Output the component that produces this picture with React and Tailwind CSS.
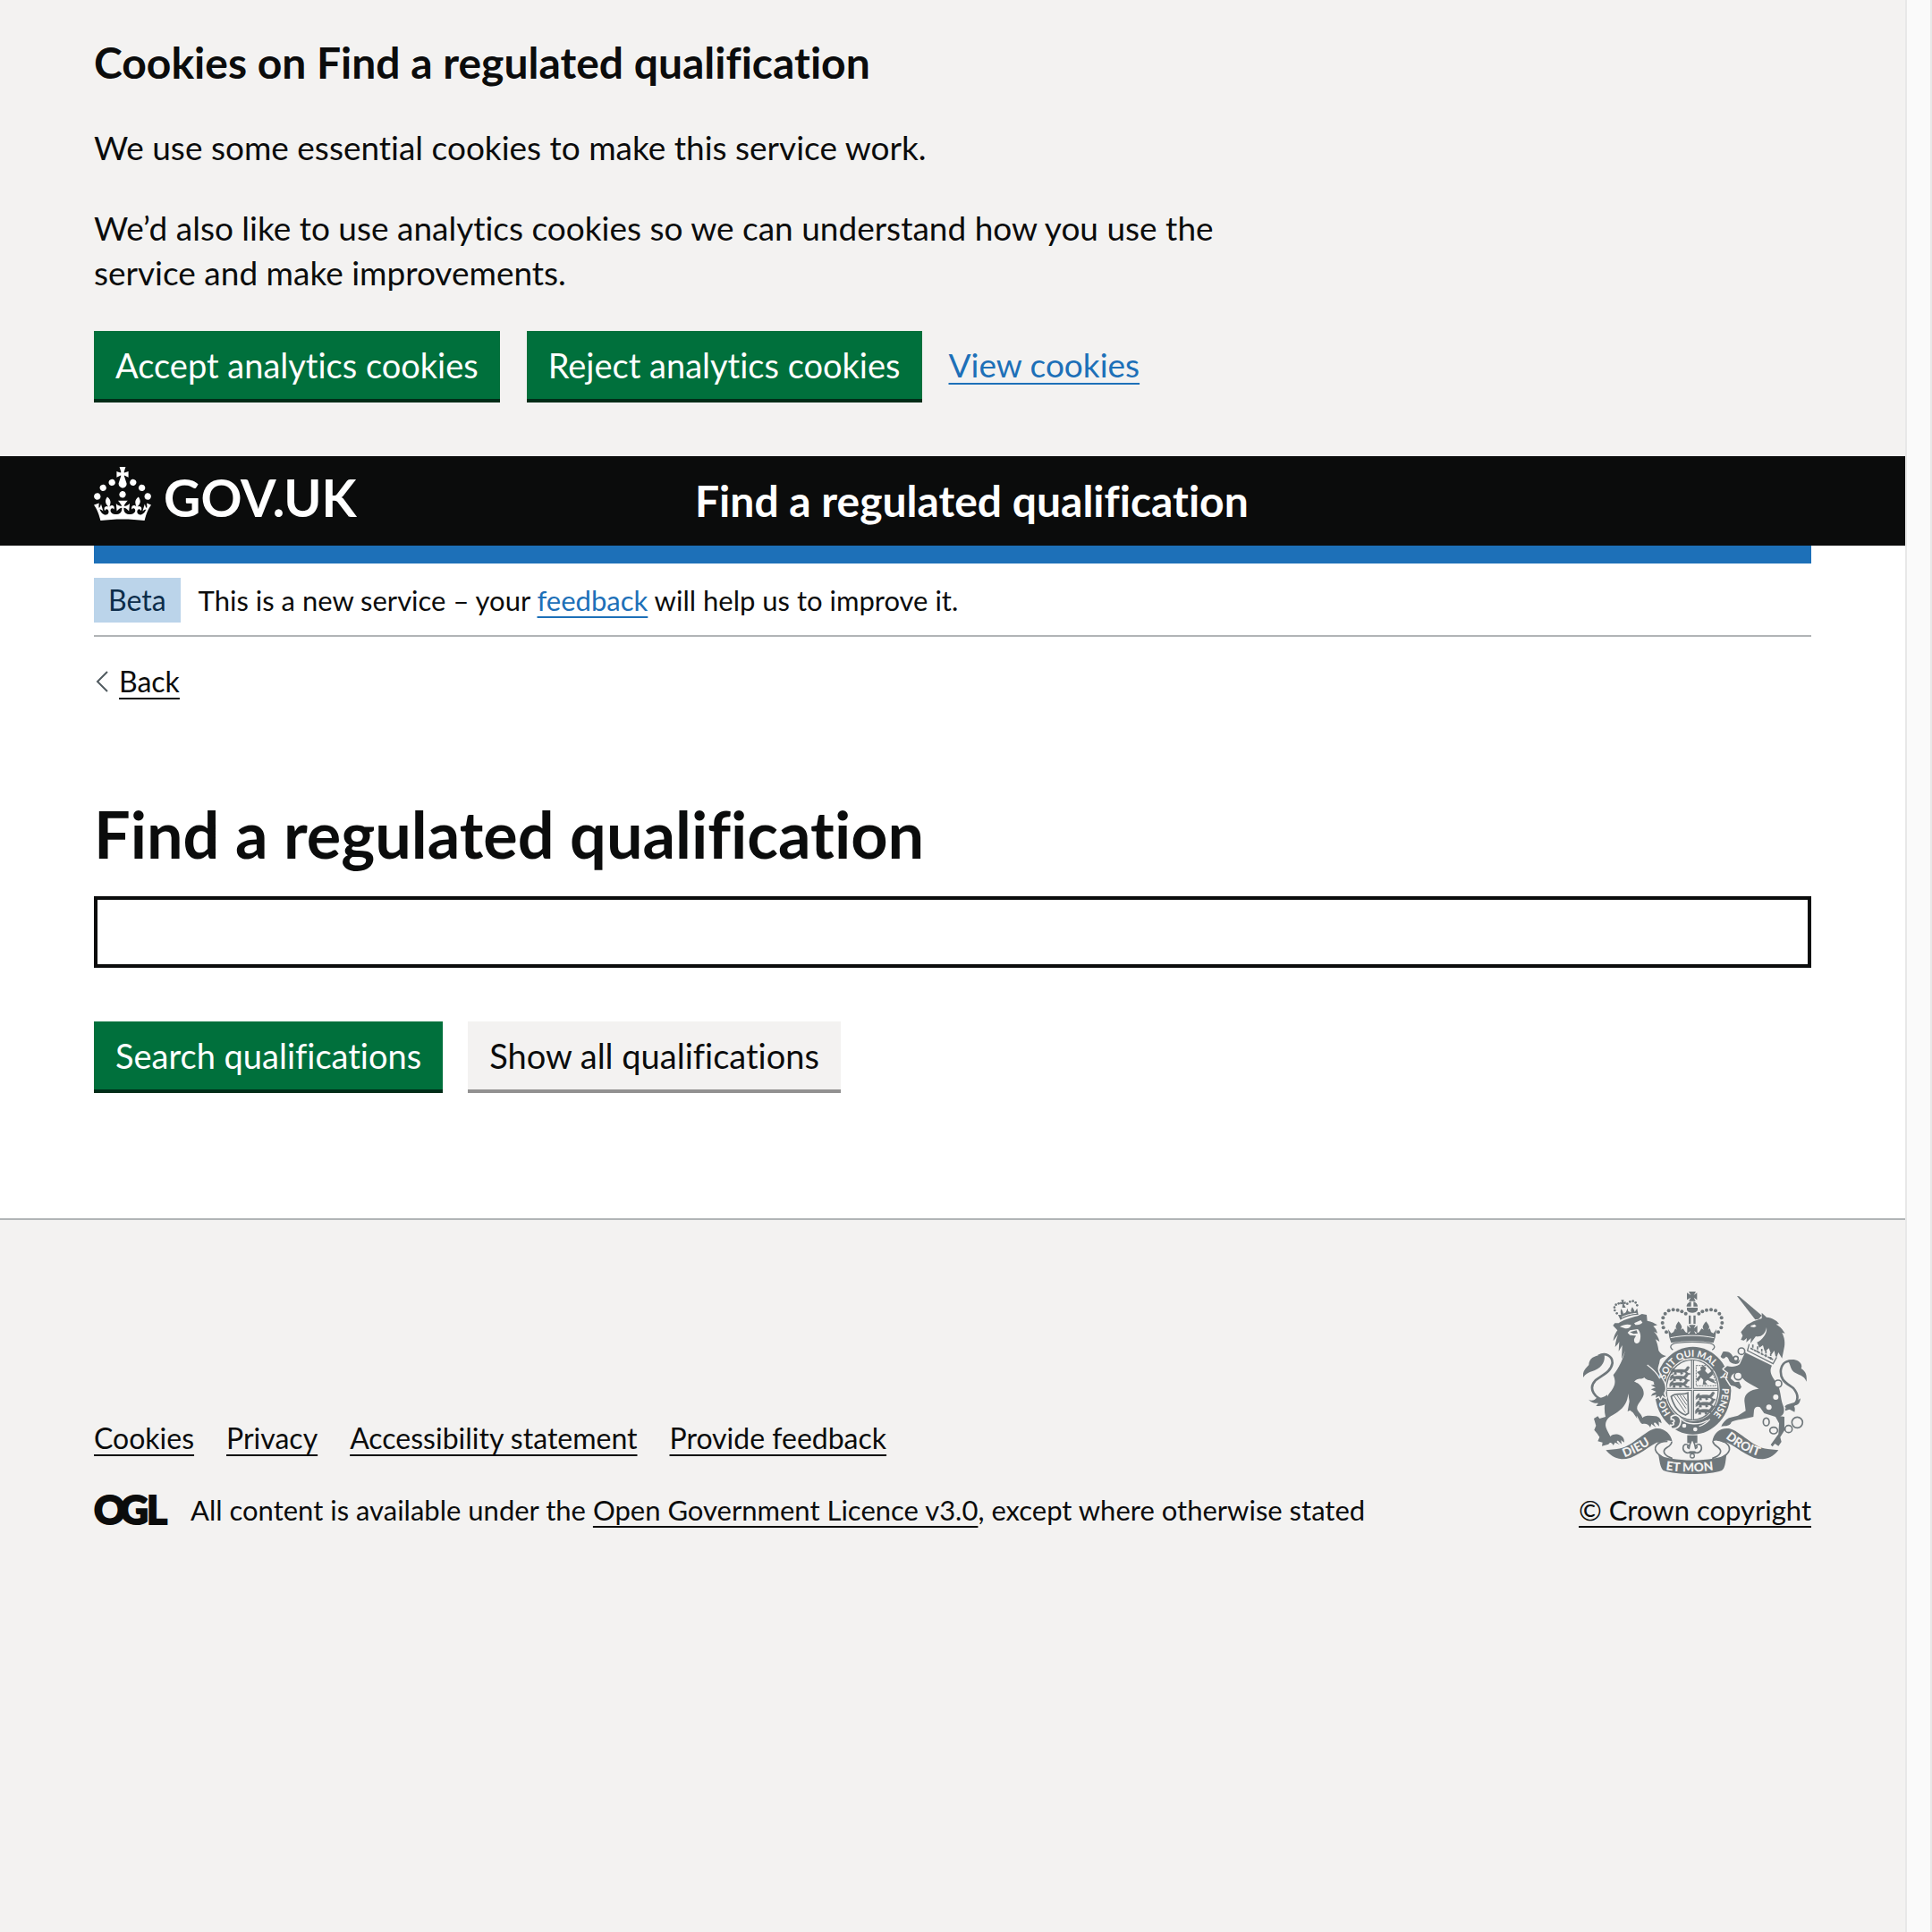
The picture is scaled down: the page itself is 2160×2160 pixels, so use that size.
import React from "react";

const link =
  "underline decoration-2 underline-offset-[6px] [text-decoration-skip-ink:none]";

function Crown() {
  return (
    <svg viewBox="0 0 32 30" className="h-[60px] w-16 shrink-0 fill-white" aria-hidden="true">
      <path d="M22.6 10.4c-1 .4-2-.1-2.4-1-.4-.9.1-2 1-2.4.9-.4 2 .1 2.4 1s-.1 2-1 2.4m-5.9 6.7c-.9.4-2-.1-2.4-1-.4-.9.1-2 1-2.4.9-.4 2 .1 2.4 1s-.1 2-1 2.4m10.8-3.7c-1 .4-2-.1-2.4-1-.4-.9.1-2 1-2.4.9-.4 2 .1 2.4 1s0 2-1 2.4m3.3 4.8c-1 .4-2-.1-2.4-1-.4-.9.1-2 1-2.4.9-.4 2 .1 2.4 1s-.1 2-1 2.4M17 4.7l2.3 1.2V2.5l-2.3.7-.2-.2.9-3h-3.4l.9 3-.2.2c-.1.1-2.3-.7-2.3-.7v3.4L15 4.7c.1.1.1.2.2.2l-1.3 4c-.1.2-.1.4-.1.6 0 1.1.8 2 1.9 2.2h.7c1-.2 1.9-1.1 1.9-2.1 0-.2 0-.4-.1-.6l-1.3-4c-.1-.2 0-.2.1-.3m-7.6 5.7c.9.4 2-.1 2.4-1 .4-.9-.1-2-1-2.4-.9-.4-2 .1-2.4 1s0 2 1 2.4m-5 3c.9.4 2-.1 2.4-1 .4-.9-.1-2-1-2.4-.9-.4-2 .1-2.4 1s.1 2 1 2.4m-3.2 4.8c.9.4 2-.1 2.4-1 .4-.9-.1-2-1-2.4-.9-.4-2 .1-2.4 1s0 2 1 2.4m14.8 11c4.4 0 8.6.3 12.3.8 1.1-4.5 2.4-7 3.7-8.8l-2.5-.9c.2 1.3.3 1.9 0 2.7-.4-.4-.8-1.1-1.1-2.3l-1.2 4c.7-.5 1.3-.8 2-.9-1.1 2.5-2.6 3.1-3.5 3-1.1-.2-1.7-1.2-1.5-2.1.3-1.2 1.5-1.5 2.1-.1 1.1-2.3-.8-3-2-2.3 1.9-1.9 2.1-3.5.6-5.6-2.1 1.6-2.1 3.2-1.2 5.5-1.2-1.4-3.2-.6-2.5 1.6.9-1.4 2.1-.5 1.9.8-.2 1.1-1.7 2.1-3.5 1.9-2.7-.2-2.9-2.1-2.9-3.6.7-.1 1.9.5 2.9 1.9l.4-4.3c-1.1 1.1-2.1 1.4-3.2 1.4.4-1.2 2.1-3 2.1-3h-5.4s1.7 1.9 2.1 3c-1.1 0-2.1-.2-3.2-1.4l.4 4.3c1-1.4 2.2-2 2.9-1.9-.1 1.5-.2 3.4-2.9 3.6-1.9.2-3.4-.8-3.5-1.9-.2-1.3 1-2.2 1.9-.8.7-2.3-1.2-3-2.5-1.6.9-2.2.9-3.9-1.2-5.5-1.5 2-1.3 3.7.6 5.6-1.2-.7-3.1 0-2 2.3.6-1.4 1.8-1.1 2.1.1.2.9-.3 1.9-1.5 2.1-.9.2-2.4-.5-3.5-3 .6 0 1.2.3 2 .9l-1.2-4c-.3 1.1-.7 1.9-1.1 2.3-.3-.8-.2-1.4 0-2.7l-2.9.9C1.3 23 2.6 25.5 3.7 30c3.7-.5 7.9-.8 12.3-.8" />
    </svg>
  );
}

const INK = "#6f777b";
const PAPER = "#f3f2f1";

function Pearls({ points, r }) {
  return points.map(([x, y]) => <circle key={`${x}-${y}`} cx={x} cy={y} r={r} />);
}

/* A small heraldic lion passant, repeated in the quarters of the shield. */
function Passant({ x, y }) {
  return (
    <path
      transform={`translate(${x} ${y})`}
      d="M0 14 L3 6 L8 1 L14 0 L12 5 L18 6 C28 4 38 5 46 6 C54 4 52 -4 58 -5 C66 -5 64 2 60 4 C60 9 56 11 53 12 L60 18 L66 18 L66 22 L56 22 L48 15 L40 15 L42 20 L34 22 L33 16 L20 15 L20 22 L11 22 L13 14 L8 14 L5 19 L0 19 L4 12Z"
    />
  );
}

function Crest() {
  return (
    <svg
      viewBox="57 42 750 612"
      className="h-[204px] w-[250px]"
      fill={INK}
      role="img"
      aria-label="Royal coat of arms"
    >
      <defs>
        <path id="garter-top" d="M332 338 A98 113 0 0 1 514 326" />
        <path id="garter-right" d="M523 366 A98 113 0 0 1 480 467" />
        <path id="garter-left" d="M351 450 A98 113 0 0 1 327 385" />
        <path id="scroll-left" d="M196 598 Q252 578 310 534" />
        <path id="scroll-right" d="M534 532 Q590 582 670 600" />
        <path id="scroll-mid" d="M334 640 Q423 654 524 636" />
      </defs>

      {/* imperial crown */}
      <path d="M411 42 H435 L428 54 L439 46 V70 L428 62 L434 74 H411 L418 62 L405 70 V46 L418 54Z" />
      <path d="M427 76 V92 H441 C441 84 434 77 427 76Z M419 76 C411 77 404 84 404 92 H419Z" />
      <path d="M405 96 H441 V104 C436 116 410 116 405 104Z" />
      <Pearls
        r={6}
        points={[[336, 178], [326, 163], [323, 147], [325, 130], [332, 116], [344, 106], [359, 103], [374, 104], [388, 109], [401, 116], [510, 178], [520, 163], [523, 147], [521, 130], [514, 116], [501, 106], [486, 103], [471, 104], [457, 109], [445, 116]]}
      />
      <path d="M411 122 H418 V150 H411Z M427 122 H434 V150 H427Z" />
      <path d="M342 168 L352 182 L360 178 L366 166 L372 170 C362 160 372 150 377 142 C382 150 394 160 384 170 L392 166 L400 178 L412 184 L418 174 L406 182 V156 L418 166 L412 154 H434 L428 166 L440 156 V182 L429 174 L434 184 L446 178 L454 166 L462 170 C452 160 464 150 469 142 C474 150 486 160 476 170 L482 166 L486 178 L494 182 L504 168 L500 196 L494 214 C450 206 396 206 352 214 L346 196Z" />
      <path d="M350 197 C400 187 446 187 496 197" fill="none" stroke={PAPER} strokeWidth="3" />
      <path d="M358 238 C342 226 354 216 372 214 C406 210 440 210 474 214 C494 216 506 226 490 238" fill={PAPER} stroke={INK} strokeWidth="4" />

      {/* garter */}
      <ellipse cx="425" cy="374" rx="128" ry="147" />
      <ellipse cx="423" cy="371" rx="92" ry="106" fill={PAPER} />
      <ellipse cx="423" cy="372" rx="87" ry="101" fill={PAPER} stroke={INK} strokeWidth="4" />
      <path d="M424 270 V474 M337 370 H509" stroke={INK} strokeWidth="10" />
      <path d="M424 272 V472 M339 370 H507" stroke={PAPER} strokeWidth="3" />
      <g stroke={INK} strokeWidth="1">
        <Passant x={350} y={298} />
        <Passant x={347} y={320} />
        <Passant x={346} y={342} />
        <Passant x={434} y={384} />
        <Passant x={434} y={408} />
        <Passant x={432} y={432} />
      </g>
      <path d="M438 312 L452 306 L450 296 L460 290 L470 298 L466 308 L476 318 L488 308 L482 300 L494 304 L492 320 L480 332 L494 336 L500 350 L488 346 L474 338 L466 344 L474 354 L458 354 L460 338 L452 330 L442 344 L436 336 L448 322Z" />
      <path d="M436 290 H470 C486 300 500 324 502 358 H436Z" fill="none" stroke={INK} strokeWidth="3" strokeDasharray="6 3" />
      <path d="M352 394 C368 378 390 392 408 382 L410 450 L400 456 C376 448 362 430 352 394Z" fill="none" stroke={INK} strokeWidth="5" />
      <path d="M362 392 L400 448 M372 390 L402 434 M382 390 L404 422 M392 390 L406 410" stroke={INK} strokeWidth="3" />

      {/* buckle and strap */}
      <path d="M384 468 C404 490 446 490 474 474" fill="none" stroke={PAPER} strokeWidth="4" />
      <path d="M352 462 C368 450 384 460 384 478 C382 496 368 506 352 500 L350 490 C360 492 364 486 358 482 C366 478 362 468 352 470Z" stroke={PAPER} strokeWidth="5" />
      <circle cx="396" cy="492" r="7" fill={PAPER} />
      <circle cx="433" cy="504" r="7" fill={PAPER} />
      <path d="M446 494 C462 490 470 484 482 470" fill="none" stroke={PAPER} strokeWidth="4" />

      {/* lion */}
      <path
        paintOrder="stroke"
        stroke={PAPER}
        strokeWidth="9"
        strokeLinejoin="round"
        d="M157 156 L163 148 L176 148 C186 140 214 130 240 124 L254 117 L270 120 L272 140 C286 142 296 148 306 154 L292 158 C300 164 304 172 306 182 L294 176 C304 186 310 196 313 210 L300 202 C304 212 308 224 310 240 C316 250 324 256 335 258 C326 264 320 262 314 272 C312 290 304 298 310 312 L322 336 C330 348 334 360 332 372 C330 380 326 380 328 386 L334 398 L322 390 L316 402 L312 392 L300 398 L302 388 L284 392 L290 384 L302 378 L284 370 L300 364 L284 356 L296 354 L292 344 C270 338 250 340 232 346 C250 352 266 374 258 394 C250 412 236 422 238 436 C242 448 252 452 256 466 C264 456 284 458 300 460 C312 462 318 470 320 484 L310 478 L312 494 L300 482 C294 480 290 482 302 498 L286 486 L282 498 C276 484 264 484 256 486 C246 482 244 466 236 458 L238 468 L224 448 L214 440 L206 444 L212 410 L208 384 C206 410 196 430 172 446 C150 460 132 466 132 490 C134 506 142 514 148 528 C158 518 172 520 182 524 C192 530 196 538 194 548 L184 540 L186 554 L174 542 C168 542 168 546 180 556 L164 548 L158 558 C152 546 146 548 142 554 L120 560 L122 548 L106 544 L112 530 L104 518 L94 506 L100 492 L93 468 L106 460 L112 468 L132 462 C124 430 130 398 152 374 C166 356 166 340 158 322 C176 300 190 270 198 240 C194 250 190 260 186 268 L188 222 C182 232 180 238 176 242 L178 210 C174 218 170 222 164 228 C166 208 170 196 174 186 L158 208 C160 190 166 180 172 172Z"
      />
      <path
        d="M134 408 C96 402 72 368 98 340 C118 322 150 314 155 282 C156 258 132 245 108 258"
        fill="none"
        stroke={INK}
        strokeWidth="8"
      />
      <path d="M57 330 C54 312 62 302 76 288 C76 268 92 254 128 255 C132 276 118 298 96 306 C78 312 66 316 57 330Z" />
      <path d="M75 404 C86 410 96 406 102 398 C112 402 124 398 138 388 L138 416 C126 424 112 426 100 426 L108 416 C96 418 84 414 75 404Z" />
      <g fill={PAPER}>
        <path d="M180 160 C192 152 206 150 218 154 C216 166 202 168 194 164Z" />
        <path d="M228 148 L250 138 L256 146 C248 154 240 154 232 154Z" />
        <path d="M206 180 L214 172 L240 168 C248 176 252 190 248 204 C246 218 230 220 228 208 C226 200 232 196 234 190 L214 188Z" />
      </g>
      <path d="M214 178 L236 172 L240 182 L226 184Z" />
      <path d="M272 288 C288 300 304 312 314 334" fill="none" stroke={PAPER} strokeWidth="4" />
      <path d="M228 344 C240 330 254 338 262 330 C268 340 282 338 296 346 L260 352Z" fill={PAPER} />

      {/* lion's crown */}
      <path d="M174 120 L182 137 C198 126 222 120 242 120 L238 98 L230 110 C228 104 226 100 222 94 C218 100 216 104 218 112 L208 108 L206 98 L200 112 L192 116 C190 108 188 104 184 100 C182 108 182 112 184 120Z" />
      <path d="M186 128 C202 120 220 116 236 115" fill="none" stroke={PAPER} strokeWidth="3" />
      <Pearls
        r={4}
        points={[[170, 115], [163, 105], [162, 95], [167, 86], [176, 82], [205, 83], [214, 76], [224, 74], [233, 79], [238, 88]]}
      />
      <path d="M184 70 L194 70 L192 77 L200 76 V84 L193 83 L200 96 H188 L189 84 L181 85 L180 77 L187 78Z" />

      {/* unicorn */}
      <path
        d="M728 440 C768 430 792 402 762 366 C742 350 716 342 720 304 C724 282 742 268 764 278"
        fill="none"
        stroke={INK}
        strokeWidth="8"
      />
      <path d="M744 272 C776 264 796 284 788 300 C804 310 808 322 806 344 C798 322 778 322 764 312 C752 302 752 288 744 272Z" />
      <path d="M786 400 C784 420 776 424 762 424 C768 430 768 438 766 446 C752 436 744 438 732 428 C742 418 756 418 770 412Z" />
      <g paintOrder="stroke" stroke={PAPER} strokeWidth="9" strokeLinejoin="round">
        <path d="M604 226 L594 262 C588 288 566 288 552 280 C544 274 546 262 536 260 C530 268 524 268 518 260 L526 244 C536 242 546 244 552 250 C560 258 562 270 576 276 C590 268 598 250 604 226Z" />
        <path d="M600 246 L690 290 C680 310 688 326 706 348 C720 370 718 396 726 420 C734 438 732 456 718 460 L732 462 L732 508 L718 530 L722 546 L712 560 L700 552 L692 562 L686 556 L700 536 L712 520 L714 484 L702 462 L664 450 L650 430 C640 426 632 430 630 440 L628 462 L600 468 C580 472 562 474 554 480 C550 494 536 492 520 494 C524 484 534 472 546 466 L576 458 L602 442 L598 410 C596 386 616 370 646 368 C620 352 592 344 584 318 C568 312 554 316 552 334 L566 346 L580 344 L588 362 L582 370 L566 360 L552 356 L538 334 L544 314 L528 302 L540 292 C556 296 570 294 582 286Z" />
      </g>
      <path d="M573 57 L580 58 L656 122 L646 134 L634 136Z" />
      <path d="M586 204 L592 190 L586 178 L606 154 L628 142 L656 132 L656 113 L672 128 C690 130 706 138 714 150 L704 152 C720 160 726 170 734 182 L724 180 C732 196 736 214 730 236 L724 266 L712 246 L704 268 L698 240 L688 254 L680 232 L666 244 L660 222 L648 230 L640 212 C656 206 676 182 672 162 C668 186 652 196 636 192 L618 216 L620 198 L604 212 L606 198 L596 206Z" />
      <path d="M620 156 L632 152 L638 158 L630 162 L618 160Z" fill={PAPER} />
      <path d="M616 216 L708 262 L694 290 L604 244Z" fill={PAPER} />
      <path d="M614 218 L608 240 L694 284 L706 262" fill="none" stroke={INK} strokeWidth="4" />
      <path d="M618 232 L694 270 M626 220 V238 M642 226 V246 M656 234 V254 M670 240 V262 M686 248 V270" stroke={INK} strokeWidth="5" strokeDasharray="10 3" />
      <g fill={PAPER} stroke={INK} strokeWidth="5">
        <ellipse cx="588" cy="242" rx="11" ry="11" />
        <ellipse cx="569" cy="267" rx="8" ry="8" />
        <circle cx="577" cy="325" r="13" />
        <circle cx="711" cy="351" r="12" />
        <ellipse cx="671" cy="479" rx="10" ry="13" />
        <ellipse cx="696" cy="508" rx="13" ry="11" />
        <circle cx="746" cy="503" r="12" />
        <circle cx="775" cy="481" r="18" />
      </g>
      <circle cx="703" cy="396" r="9" fill={PAPER} />
      <circle cx="680" cy="430" r="9" fill={PAPER} />

      {/* motto on the garter */}
      <g fill={PAPER} fontFamily="Lato, 'Liberation Sans', sans-serif" fontWeight="900" fontSize="31">
        <text>
          <textPath href="#garter-top">SOIT QUI MAL</textPath>
        </text>
        <text>
          <textPath href="#garter-left">HO</textPath>
        </text>
        <text transform="translate(513 322) rotate(68)">Y</text>
        <text>
          <textPath href="#garter-right">PENSE</textPath>
        </text>
      </g>

      {/* fleur-de-lis */}
      <path d="M406 524 H440 V550 H406Z" />
      <path
        d="M417 580 C404 588 392 578 392 566 C392 556 402 550 410 558 C406 560 406 566 412 568 C414 552 418 546 423 536 C428 546 432 552 434 568 C440 566 440 560 436 558 C444 550 454 556 454 566 C454 578 442 588 429 580 Z"
        fill={PAPER}
        stroke={INK}
        strokeWidth="5"
      />
      <path d="M412 578 H434 V586 H412Z" />
      <circle cx="423" cy="593" r="7" fill={PAPER} stroke={INK} strokeWidth="4" />

      {/* scroll */}
      <path d="M340 544 C304 544 286 566 310 588 L326 600 M354 546 C352 566 328 562 328 578 C328 592 344 596 356 602 M506 540 C542 544 560 566 538 588 L520 600 M492 544 C494 562 518 562 518 578 C518 592 502 596 490 602" fill="none" stroke={INK} strokeWidth="5" />
      <path d="M133 574 L170 570 C220 566 260 510 300 501 C330 498 352 520 356 546 C346 540 332 540 318 548 L304 548 C260 572 230 604 186 604 C160 602 146 588 133 574Z" />
      <path d="M712 574 L676 570 C626 566 586 510 546 501 C516 498 494 516 490 546 C500 540 512 540 526 548 L540 548 C586 572 616 604 660 604 C686 602 700 588 712 574Z" />
      <path d="M309 587 C340 614 506 614 538 587 C534 612 534 634 522 642 C480 658 370 658 326 642 C314 630 314 610 309 587Z" />
      <g fill={PAPER} fontFamily="Lato, 'Liberation Sans', sans-serif" fontWeight="900" fontSize="41">
        <text>
          <textPath href="#scroll-left">DIEU</textPath>
        </text>
        <text>
          <textPath href="#scroll-mid">ET MON</textPath>
        </text>
        <text>
          <textPath href="#scroll-right">DROIT</textPath>
        </text>
      </g>
    </svg>
  );
}

function Ogl() {
  return (
    <svg
      viewBox="0 0 82 34"
      className="h-[34px] w-[82px] shrink-0 overflow-visible"
      role="img"
      aria-label="Open Government Licence"
      fill="#0b0c0c"
      stroke="#0b0c0c"
      strokeWidth="2"
      fontFamily="Lato, 'Liberation Sans', sans-serif"
      fontWeight="900"
      fontSize="44"
    >
      <text x="0" y="33">O</text>
      <text x="29" y="33">G</text>
      <text x="59" y="33">L</text>
    </svg>
  );
}

function Button({ secondary, children, ...props }) {
  return (
    <button
      {...props}
      className={
        "h-[76px] cursor-pointer px-6 text-[38px] leading-[50px] " +
        (secondary
          ? "bg-[#f3f2f1] text-[#0b0c0c] shadow-[0_4px_0_#929191]"
          : "bg-[#00703c] text-white shadow-[0_4px_0_#002d18]")
      }
    >
      {children}
    </button>
  );
}

function CookieBanner() {
  return (
    <section aria-label="Cookies on Find a regulated qualification" className="bg-[#f3f2f1] px-[30px] pt-10 pb-16">
      <div className="mx-auto max-w-[1920px]">
        <div className="max-w-[1280px]">
          <h2 className="mb-10 text-[48px] leading-[60px] font-bold">Cookies on Find a regulated qualification</h2>
          <p className="mb-10 text-[37px] leading-[50px]">We use some essential cookies to make this service work.</p>
          <p className="mb-10 text-[37px] leading-[50px]">
            We’d also like to use analytics cookies so we can understand how you use the service and make improvements.
          </p>
        </div>
        <div className="flex flex-wrap items-center gap-[30px]">
          <Button type="button">Accept analytics cookies</Button>
          <Button type="button">Reject analytics cookies</Button>
          <a href="#cookies" className={`text-[37px] leading-[50px] text-[#1d70b8] ${link}`}>
            View cookies
          </a>
        </div>
      </div>
    </section>
  );
}

function Header() {
  return (
    <header className="bg-[#0b0c0c] px-[30px] text-white">
      <div className="mx-auto flex h-[100px] max-w-[1920px] items-center">
        <a href="#home" className="flex w-[35%] items-start gap-[14px] pb-3">
          <Crown />
          <span className="pt-1 text-[57px] leading-[60px] font-bold">GOV.UK</span>
        </a>
        <a href="#service" className="text-[48px] leading-[60px] font-bold">
          Find a regulated qualification
        </a>
      </div>
    </header>
  );
}

function Footer() {
  const links = ["Cookies", "Privacy", "Accessibility statement", "Provide feedback"];
  return (
    <footer className="flex-1 border-t-2 border-[#b1b4b6] bg-[#f3f2f1] px-[30px] pt-20 pb-10 text-[31px] leading-[40px]">
      <div className="mx-auto flex max-w-[1920px] items-end justify-between">
        <div>
          <ul className="mb-10 flex flex-wrap gap-9 text-[32px]">
            {links.map((text) => (
              <li key={text}>
                <a href="#footer" className={link}>
                  {text}
                </a>
              </li>
            ))}
          </ul>
          <div className="flex items-center gap-[26px]">
            <Ogl />
            <p>
              All content is available under the{" "}
              <a href="#licence" className={link}>
                Open Government Licence v3.0
              </a>
              , except where otherwise stated
            </p>
          </div>
        </div>
        <div className="flex flex-col items-center gap-5">
          <Crest />
          <a href="#copyright" className={link}>
            © Crown copyright
          </a>
        </div>
      </div>
    </footer>
  );
}

export default function App() {
  return (
    <div className="flex min-h-screen bg-white font-['Lato','Liberation_Sans',sans-serif] text-[#0b0c0c] [font-variant-ligatures:none]">
      <div className="flex min-w-0 flex-1 flex-col">
        <CookieBanner />
        <Header />
        <div className="px-[30px]">
          <div className="mx-auto max-w-[1920px]">
            <div className="h-5 bg-[#1d70b8]" />
            <div className="flex items-center gap-5 border-b-2 border-[#b1b4b6] pt-4 pb-3.5">
              <strong className="bg-[#bbd4ea] px-4 text-[32px] leading-[50px] font-normal text-[#0c2d4a]">Beta</strong>
              <span className="text-[31px] leading-[40px]">
                This is a new service – your{" "}
                <a href="#feedback" className={`text-[#1d70b8] ${link}`}>
                  feedback
                </a>{" "}
                will help us to improve it.
              </span>
            </div>
            <a href="#back" className="mt-[30px] flex w-fit items-center gap-2 text-[32px] leading-[40px]">
              <svg viewBox="0 0 20 24" className="h-6 w-5" fill="none" stroke="#505a5f" strokeWidth="2" aria-hidden="true">
                <path d="M15 1 L4 12 L15 23" />
              </svg>
              <span className={link}>Back</span>
            </a>
            <main className="pt-[110px] pb-[144px]">
              <form onSubmit={(e) => e.preventDefault()}>
                <h1 className="mb-[30px] text-[72px] leading-[80px] font-bold">
                  <label htmlFor="search">Find a regulated qualification</label>
                </h1>
                <input
                  id="search"
                  type="text"
                  className="block h-20 w-full border-4 border-[#0b0c0c] bg-white px-2 text-[38px]"
                />
                <div className="mt-[60px] flex gap-7">
                  <Button type="submit">Search qualifications</Button>
                  <Button type="button" secondary>
                    Show all qualifications
                  </Button>
                </div>
              </form>
            </main>
          </div>
        </div>
        <Footer />
      </div>
      <div className="w-[30px] shrink-0 border-x-2 border-[#e8e8e8] bg-[#fafafa]" />
    </div>
  );
}
